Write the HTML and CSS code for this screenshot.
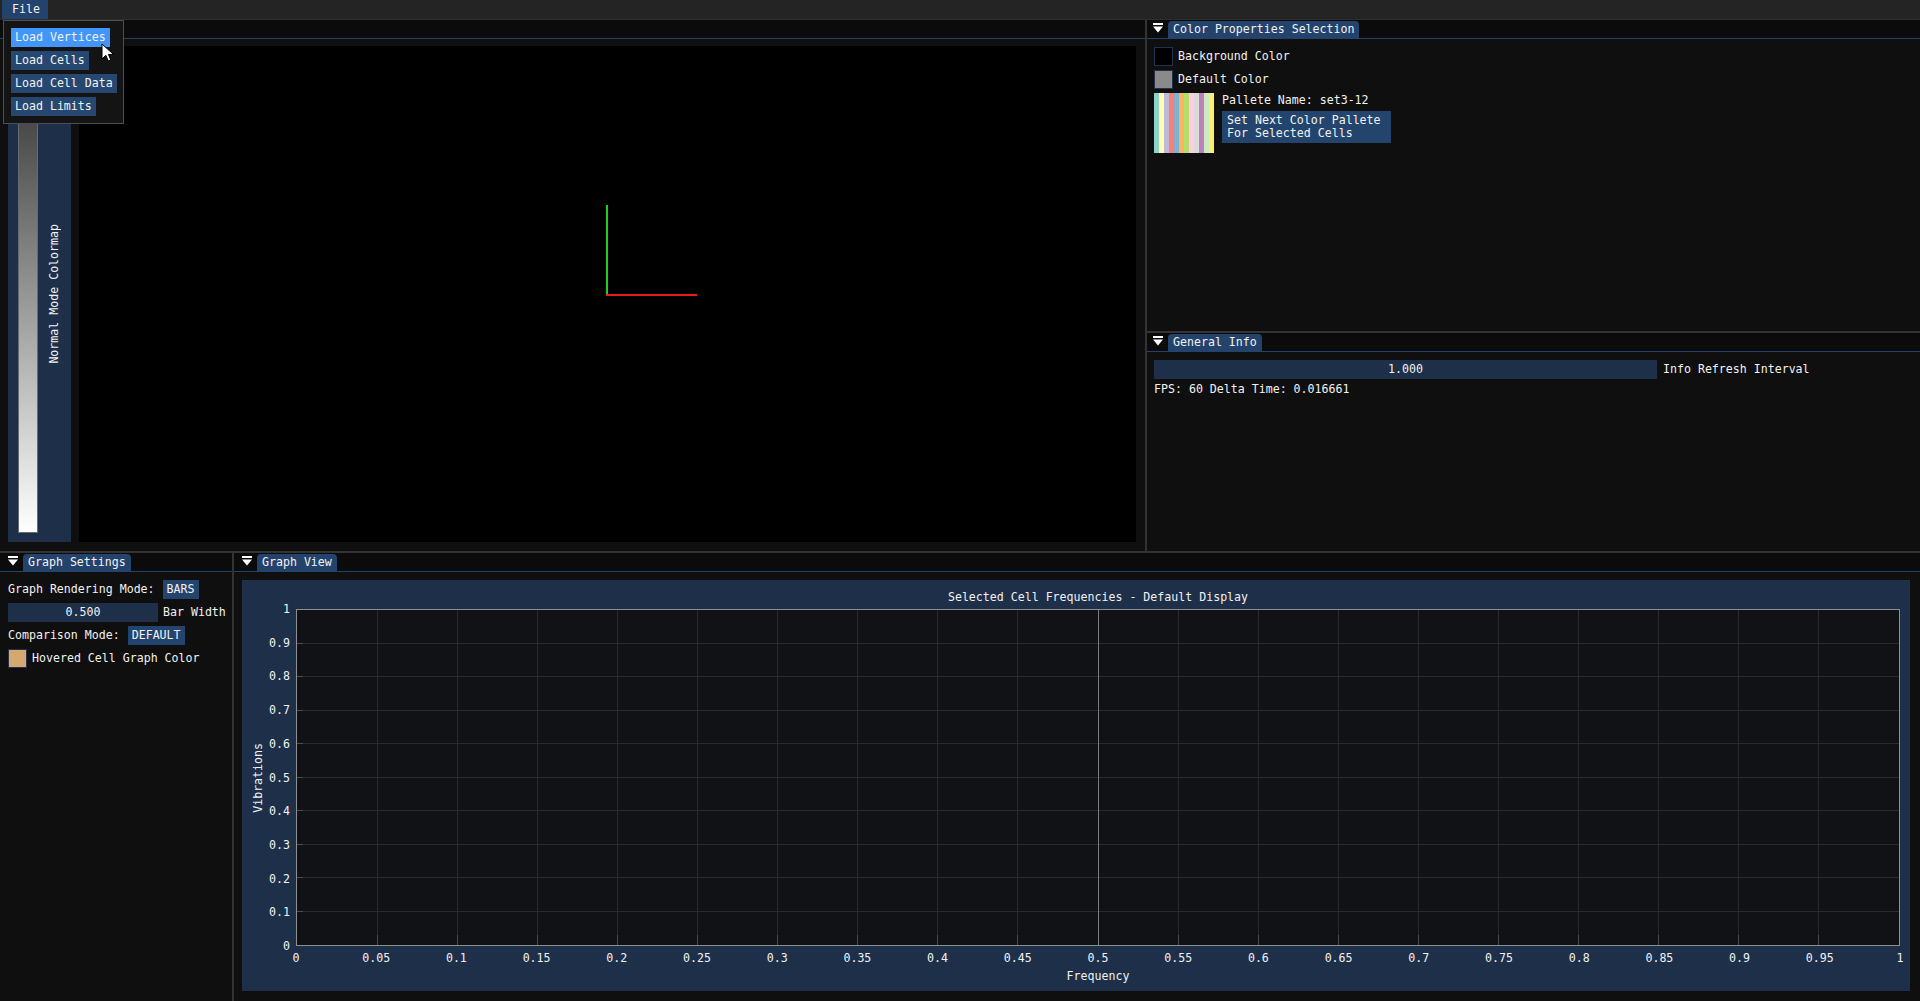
FILE: index.html
```html
<!DOCTYPE html>
<html>
<head>
<meta charset="utf-8">
<title>Viewer</title>
<link rel="stylesheet" href="styles.css">
</head>
<body>
<div class="app">
  <div class="menubar"><div class="menu-item">File</div></div>
  <div class="dock">
    <div class="row-top">
      <div class="win win-view">
        <div class="tabbar">
          <svg class="tri" viewBox="0 0 10 10"><rect x="0" y="0" width="10" height="2" fill="#fff"/><path d="M0 3.5H10L5 9.5Z" fill="#fff"/></svg>
        </div>
        <div class="view-content">
          <div class="colormap">
            <div class="cm-bar"></div>
            <div class="cm-label"><span>Normal Mode Colormap</span></div>
          </div>
          <div class="viewport">
            <svg class="axes" width="1057" height="496">
              <line x1="528" y1="159" x2="528" y2="250" stroke="#1fcf1f" stroke-width="2"/>
              <line x1="527" y1="249" x2="618" y2="249" stroke="#ee1a1a" stroke-width="2"/>
            </svg>
          </div>
        </div>
      </div>
      <div class="col-right">
        <div class="win win-color">
          <div class="tabbar">
            <svg class="tri" viewBox="0 0 10 10"><rect x="0" y="0" width="10" height="2" fill="#fff"/><path d="M0 3.5H10L5 9.5Z" fill="#fff"/></svg>
            <div class="tab">Color Properties Selection</div>
          </div>
          <div class="content">
            <div class="row"><span class="swatch sw-black"></span><span class="lbl">Background Color</span></div>
            <div class="row"><span class="swatch sw-gray"></span><span class="lbl">Default Color</span></div>
            <div class="palette-row">
              <div class="palette"></div>
              <div class="palette-info">
                <div class="pname">Pallete Name: set3-12</div>
                <div class="btn btn-multi">Set Next Color Pallete<br>For Selected Cells</div>
              </div>
            </div>
          </div>
        </div>
        <div class="win win-info">
          <div class="tabbar">
            <svg class="tri" viewBox="0 0 10 10"><rect x="0" y="0" width="10" height="2" fill="#fff"/><path d="M0 3.5H10L5 9.5Z" fill="#fff"/></svg>
            <div class="tab">General Info</div>
          </div>
          <div class="content">
            <div class="row"><div class="slider slider-wide">1.000</div><span class="lbl lbl-6">Info Refresh Interval</span></div>
            <div class="text">FPS: 60 Delta Time: 0.016661</div>
          </div>
        </div>
      </div>
    </div>
    <div class="row-bottom">
      <div class="win win-settings">
        <div class="tabbar tabbar-b">
          <svg class="tri" viewBox="0 0 10 10"><rect x="0" y="0" width="10" height="2" fill="#fff"/><path d="M0 3.5H10L5 9.5Z" fill="#fff"/></svg>
          <div class="tab">Graph Settings</div>
        </div>
        <div class="content">
          <div class="row"><span class="text">Graph Rendering Mode:</span><span class="btn gap8">BARS</span></div>
          <div class="row"><div class="slider slider-small">0.500</div><span class="lbl">Bar Width</span></div>
          <div class="row"><span class="text">Comparison Mode:</span><span class="btn gap8">DEFAULT</span></div>
          <div class="row"><span class="swatch sw-tan"></span><span class="lbl">Hovered Cell Graph Color</span></div>
        </div>
      </div>
      <div class="win win-graph">
        <div class="tabbar tabbar-b">
          <svg class="tri" viewBox="0 0 10 10"><rect x="0" y="0" width="10" height="2" fill="#fff"/><path d="M0 3.5H10L5 9.5Z" fill="#fff"/></svg>
          <div class="tab">Graph View</div>
        </div>
        <div class="graph-content">
          <div class="plot-frame">
            <div class="plot-title">Selected Cell Frequencies - Default Display</div>
            <div class="plot-mid">
              <div class="y-title"><span>Vibrations</span></div>
              <div class="y-ticks">
                <span style="top:0%">1</span>
                <span style="top:10%">0.9</span>
                <span style="top:20%">0.8</span>
                <span style="top:30%">0.7</span>
                <span style="top:40%">0.6</span>
                <span style="top:50%">0.5</span>
                <span style="top:60%">0.4</span>
                <span style="top:70%">0.3</span>
                <span style="top:80%">0.2</span>
                <span style="top:90%">0.1</span>
                <span style="top:100%">0</span>
              </div>
              <div class="plot-area">
                <svg class="grid" viewBox="0 0 1602 335" preserveAspectRatio="none">
                  <path class="gl" d="M80.5 0V335M160.5 0V335M240.5 0V335M320.5 0V335M400.5 0V335M480.5 0V335M560.5 0V335M640.5 0V335M720.5 0V335M881.5 0V335M961.5 0V335M1041.5 0V335M1121.5 0V335M1201.5 0V335M1281.5 0V335M1361.5 0V335M1441.5 0V335M1521.5 0V335M0 33.5H1602M0 66.5H1602M0 100.5H1602M0 133.5H1602M0 167.5H1602M0 200.5H1602M0 234.5H1602M0 267.5H1602M0 301.5H1602"/>
                  <path class="tk" d="M80.5 325V335M160.5 325V335M240.5 325V335M320.5 325V335M400.5 325V335M480.5 325V335M560.5 325V335M640.5 325V335M720.5 325V335M881.5 325V335M961.5 325V335M1041.5 325V335M1121.5 325V335M1201.5 325V335M1281.5 325V335M1361.5 325V335M1441.5 325V335M1521.5 325V335M0 33.5H6M0 66.5H6M0 100.5H6M0 133.5H6M0 167.5H6M0 200.5H6M0 234.5H6M0 267.5H6M0 301.5H6"/>
                  <path class="mid" d="M801.5 0V335"/>
                </svg>
              </div>
            </div>
            <div class="x-ticks">
              <span style="left:0%">0</span>
              <span style="left:5%">0.05</span>
              <span style="left:10%">0.1</span>
              <span style="left:15%">0.15</span>
              <span style="left:20%">0.2</span>
              <span style="left:25%">0.25</span>
              <span style="left:30%">0.3</span>
              <span style="left:35%">0.35</span>
              <span style="left:40%">0.4</span>
              <span style="left:45%">0.45</span>
              <span style="left:50%">0.5</span>
              <span style="left:55%">0.55</span>
              <span style="left:60%">0.6</span>
              <span style="left:65%">0.65</span>
              <span style="left:70%">0.7</span>
              <span style="left:75%">0.75</span>
              <span style="left:80%">0.8</span>
              <span style="left:85%">0.85</span>
              <span style="left:90%">0.9</span>
              <span style="left:95%">0.95</span>
              <span style="left:100%">1</span>
            </div>
            <div class="x-title">Frequency</div>
          </div>
        </div>
      </div>
    </div>
  </div>

  <div class="popup">
    <div class="btn pbtn sel">Load Vertices</div>
    <div class="btn pbtn">Load Cells</div>
    <div class="btn pbtn">Load Cell Data</div>
    <div class="btn pbtn">Load Limits</div>
  </div>
  <svg class="cursor" width="14" height="20" viewBox="0 0 14 20">
    <path d="M1 1V16L4.8 12.3L7.3 18L9.8 17L7.4 11.4H12.5Z" fill="#fff" stroke="#000" stroke-width="1"/>
  </svg>
</div>
</body>
</html>
```
FILE: styles.css
```css
* { box-sizing: border-box; }
html, body { margin: 0; padding: 0; }
body {
  width: 1920px;
  height: 1001px;
  overflow: hidden;
  background: #0f0f0f;
  font-family: "DejaVu Sans Mono", "Liberation Mono", monospace;
  font-size: 11.6px;
  line-height: 13px;
  color: #f2f2f2;
}
.app {
  position: relative;
  width: 1920px;
  height: 1001px;
  display: flex;
  flex-direction: column;
}
.menubar {
  flex: none;
  height: 20px;
  background: #242424;
  border-bottom: 1px solid #2e2e2e;
  display: flex;
  padding-left: 2px;
}
.menu-item {
  height: 19px;
  padding: 0 8px 0 10px;
  display: flex;
  align-items: center;
  background: #23436c;
}
.dock {
  flex: 1;
  display: flex;
  flex-direction: column;
  gap: 2px;
  background: #333333;
}
.row-top { height: 531px; display: flex; gap: 2px; flex: none; }
.row-bottom { flex: 1; display: flex; gap: 2px; min-height: 0; }
.win {
  background: #0f0f0f;
  display: flex;
  flex-direction: column;
  min-width: 0;
  min-height: 0;
}
.win-view { width: 1145px; flex: none; }
.col-right { flex: 1; display: flex; flex-direction: column; gap: 2px; }
.win-color { height: 311px; flex: none; }
.win-info { flex: 1; }
.win-settings { width: 232px; flex: none; }
.win-graph { flex: 1; }

.tabbar {
  flex: none;
  height: 19px;
  display: flex;
  align-items: flex-end;
  background: #0b0b0b;
  border-bottom: 1px solid #23436c;
  padding-left: 6px;
}
.tabbar-b { padding-left: 8px; }
.tri { width: 10px; height: 10px; margin: 0 5px 5px 0; flex: none; }
.tab {
  height: 17px;
  padding: 0 5px;
  background: #23436c;
  border-radius: 4px 4px 0 0;
  display: flex;
  align-items: center;
  white-space: nowrap;
}

/* 3D view */
.view-content {
  flex: 1;
  display: flex;
  gap: 8px;
  padding: 7px 9px 9px 8px;
}
.colormap {
  width: 63px;
  flex: none;
  background: #1d2f49;
  display: flex;
  padding: 9px 0 9px 10px;
}
.cm-bar {
  width: 20px;
  border: 1px solid #6a6a6a;
  background: linear-gradient(to bottom, #2b2b2b, #ffffff);
}
.cm-label {
  flex: 1;
  display: flex;
  align-items: center;
  justify-content: center;
}
.cm-label span {
  writing-mode: vertical-rl;
  transform: rotate(180deg);
  white-space: nowrap;
}
.viewport {
  flex: 1;
  background: #000;
  position: relative;
}
.axes { position: absolute; left: 0; top: 0; }

/* generic content */
.content {
  flex: 1;
  display: flex;
  flex-direction: column;
  gap: 4px;
  padding: 8px 8px 8px 7px;
}
.win-settings .content { padding-left: 8px; }
.row { display: flex; align-items: center; height: 19px; }
.lbl { margin-left: 5px; white-space: nowrap; }
.lbl-6 { margin-left: 6px; }
.text { white-space: nowrap; }
.gap8 { margin-left: 8px; }
.swatch {
  width: 19px;
  height: 19px;
  flex: none;
  border: 1px solid #22324e;
}
.sw-black { background: #000; }
.sw-gray { background: #8a8a8a; }
.sw-tan { background: #d5a86f; }

.palette-row { display: flex; gap: 8px; }
.palette {
  width: 60px;
  height: 60px;
  background: linear-gradient(to right,
    #8dd3c7 0 5px, #ffffb3 5px 10px, #bebada 10px 15px, #fb8072 15px 20px,
    #80b1d3 20px 25px, #fdb462 25px 30px, #b3de69 30px 35px, #fccde5 35px 40px,
    #d9d9d9 40px 45px, #bc80bd 45px 50px, #ccebc5 50px 55px, #ffed6f 55px 60px);
}
.palette-info { display: flex; flex-direction: column; gap: 4px; align-items: flex-start; }
.pname { margin-top: 1px; }

.btn {
  display: inline-flex;
  align-items: center;
  height: 19px;
  padding: 0 4px;
  background: #23456d;
  white-space: nowrap;
}
.btn-multi {
  display: block;
  height: 32px;
  width: 169px;
  padding: 3px 5px;
}
.slider {
  height: 19px;
  background: #1d2f49;
  display: flex;
  align-items: center;
  justify-content: center;
  flex: none;
}
.slider-wide { width: 503px; }
.slider-small { width: 150px; }

/* graph */
.graph-content {
  flex: 1;
  display: flex;
  padding: 8px 10px 10px 8px;
}
.plot-frame {
  flex: 1;
  background: #1d2f49;
  display: flex;
  flex-direction: column;
  padding: 11px 10px 0 0;
}
.plot-title { height: 13px; margin: 0 0 5px 54px; text-align: center; white-space: nowrap; }
.plot-mid { height: 337px; display: flex; flex: none; }
.y-title { width: 23px; display: flex; justify-content: flex-end; align-items: center; }
.y-title span { writing-mode: vertical-rl; transform: rotate(180deg); white-space: nowrap; }
.y-ticks { width: 31px; position: relative; }
.y-ticks span { position: absolute; right: 6px; transform: translateY(-50%); white-space: nowrap; }
.plot-area {
  flex: 1;
  position: relative;
  background: #111215;
  border: 1px solid #8e8e8e;
}
.grid { position: absolute; left: 0; top: 0; width: 100%; height: 100%; shape-rendering: crispEdges; }
.gl { stroke: #292a2d; stroke-width: 1; fill: none; }
.tk { stroke: #4a4b4e; stroke-width: 1; fill: none; }
.mid { stroke: #7c7c7c; stroke-width: 1; fill: none; }
.x-ticks { height: 13px; margin: 6px 0 0 54px; position: relative; flex: none; }
.x-ticks span { position: absolute; top: 0; transform: translateX(-50%); white-space: nowrap; }
.x-title { height: 13px; margin: 5px 0 0 54px; text-align: center; flex: none; }

/* popup menu */
.popup {
  position: absolute;
  left: 3px;
  top: 20px;
  width: 121px;
  height: 104px;
  background: #141414;
  border: 1px solid #4e4e55;
  padding: 7px;
  display: flex;
  flex-direction: column;
  align-items: flex-start;
  gap: 4px;
}
.pbtn { background: #264870; }
.pbtn.sel { background: #4296fa; }
.cursor { position: absolute; left: 101px; top: 43px; }
```
